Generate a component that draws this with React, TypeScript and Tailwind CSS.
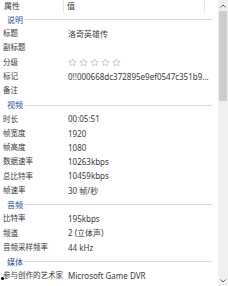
import React from 'react';

type Row =
  | { kind: 'group'; label: string }
  | { kind: 'item'; label: string; value?: string; stars?: boolean };

const rows: Row[] = [
  { kind: 'group', label: '说明' },
  { kind: 'item', label: '标题', value: '洛奇英雄传' },
  { kind: 'item', label: '副标题' },
  { kind: 'item', label: '分级', stars: true },
  { kind: 'item', label: '标记', value: '0!!000668dc372895e9ef0547c351b9...' },
  { kind: 'item', label: '备注' },
  { kind: 'group', label: '视频' },
  { kind: 'item', label: '时长', value: '00:05:51' },
  { kind: 'item', label: '帧宽度', value: '1920' },
  { kind: 'item', label: '帧高度', value: '1080' },
  { kind: 'item', label: '数据速率', value: '10263kbps' },
  { kind: 'item', label: '总比特率', value: '10459kbps' },
  { kind: 'item', label: '帧速率', value: '30 帧/秒' },
  { kind: 'group', label: '音频' },
  { kind: 'item', label: '比特率', value: '195kbps' },
  { kind: 'item', label: '频道', value: '2 (立体声)' },
  { kind: 'item', label: '音频采样频率', value: '44 kHz' },
  { kind: 'group', label: '媒体' },
  { kind: 'item', label: '参与创作的艺术家', value: 'Microsoft Game DVR' },
];

const Stars = () => (
  <div className="flex items-center gap-[2px]">
    {[0, 1, 2, 3, 4].map((i) => (
      <svg key={i} width="9" height="9" viewBox="0 0 24 24" fill="none" stroke="#b4b4b4" strokeWidth="1.8">
        <path d="M12 2.5l2.9 6.3 6.8.7-5.1 4.6 1.5 6.7L12 17.3l-6.1 3.5 1.5-6.7-5.1-4.6 6.8-.7z" />
      </svg>
    ))}
  </div>
);

export default function App() {
  return (
    <div
      className="relative flex h-[286px] w-[228px] overflow-hidden bg-white text-[8px] leading-none text-[#3a3a3a]"
      style={{ fontFamily: '"Noto Sans", "Noto Sans CJK SC", sans-serif' }}
    >
      <div className="flex min-w-0 flex-1 flex-col">
        {/* header */}
        <div className="flex h-[12.5px] shrink-0 items-center">
          <div className="flex h-full w-[64px] items-center border-r border-[#e8e8e8] pl-[4px]">属性</div>
          <div className="flex h-full w-[141px] items-center border-r border-[#e8e8e8] pl-[3px]">值</div>
        </div>

        {rows.map((row, idx) =>
          row.kind === 'group' ? (
            <div key={idx} className="flex h-[14.25px] shrink-0 items-center pl-[7px] pr-[6px]">
              <span className="text-[#2a4f96]">{row.label}</span>
              <div className="ml-[2px] h-px flex-1 bg-[#d6dbe4]" />
            </div>
          ) : (
            <div key={idx} className="flex h-[14.25px] shrink-0 items-center">
              <div className="w-[65px] whitespace-nowrap pl-[3px] text-[7.5px]">{row.label}</div>
              <div className="min-w-0 flex-1 whitespace-nowrap pl-[3px]">
                {row.stars ? <Stars /> : row.value}
              </div>
            </div>
          ),
        )}
      </div>

      {/* scrollbar */}
      <div className="flex w-[10px] shrink-0 flex-col items-center bg-[#f0f0f0]">
        <div className="flex h-[11px] w-full items-center justify-center">
          <svg width="6" height="4" viewBox="0 0 6 4">
            <path d="M0.5 3.5L3 1 5.5 3.5" fill="none" stroke="#606060" strokeWidth="1" />
          </svg>
        </div>
        <div className="h-[90px] w-[8px] bg-[#cdcdcd]" />
        <div className="flex-1" />
        <div className="flex h-[11px] w-full items-center justify-center">
          <svg width="6" height="4" viewBox="0 0 6 4">
            <path d="M0.5 0.5L3 3 5.5 0.5" fill="none" stroke="#606060" strokeWidth="1" />
          </svg>
        </div>
      </div>

      {/* cursor dot */}
      <div className="absolute left-[1px] top-[277px] h-[3px] w-[3px] rounded-full bg-black" />
    </div>
  );
}
